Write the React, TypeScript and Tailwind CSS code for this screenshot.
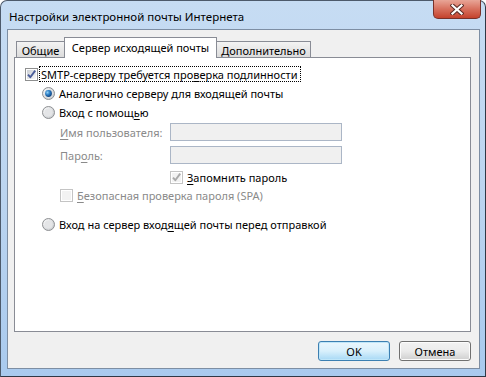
import React from 'react';

const ui = "font-['Segoe_UI','Noto_Sans',sans-serif] text-[11px] leading-none";

function Check({ checked, disabled }: { checked?: boolean; disabled?: boolean }) {
  return (
    <svg width="13" height="13" viewBox="0 0 13 13" className="shrink-0">
      <defs>
        <linearGradient id="cbg" x1="0" y1="0" x2="1" y2="1">
          <stop offset="0" stopColor="#cbcfd5" />
          <stop offset="1" stopColor="#f7f7f7" />
        </linearGradient>
      </defs>
      <rect x="0.5" y="0.5" width="12" height="12" fill="#fff" stroke={disabled ? '#c4c4c4' : '#8e8f8f'} />
      <rect x="2" y="2" width="9" height="9" fill={disabled ? '#f2f2f2' : 'url(#cbg)'} />
      {checked && (
        <path
          d="M3 6.6 L5.3 9.2 L10.2 2.6"
          fill="none"
          stroke={disabled ? '#a9a9a9' : '#4a5d9a'}
          strokeWidth="1.9"
          strokeLinejoin="round"
        />
      )}
    </svg>
  );
}

function Radio({ checked }: { checked?: boolean }) {
  return (
    <svg width="13" height="13" viewBox="0 0 13 13" className="shrink-0">
      <defs>
        <radialGradient id="rbg" cx="0.35" cy="0.35" r="0.7">
          <stop offset="0" stopColor="#ffffff" />
          <stop offset="1" stopColor="#c9cccf" />
        </radialGradient>
        <radialGradient id="rdot" cx="0.35" cy="0.35" r="0.7">
          <stop offset="0" stopColor="#8fd0f6" />
          <stop offset="0.5" stopColor="#2a7cc3" />
          <stop offset="1" stopColor="#0d3e7a" />
        </radialGradient>
      </defs>
      <circle cx="6.5" cy="6.5" r="6" fill="url(#rbg)" stroke="#8e9093" />
      <circle cx="6.5" cy="6.5" r="4" fill="#e4e5e7" />
      {checked && <circle cx="6.5" cy="6.5" r="3.4" fill="url(#rdot)" />}
    </svg>
  );
}

function Label({ text, u }: { text: string; u: number }) {
  return (
    <span className="whitespace-nowrap">
      {text.slice(0, u)}
      <span className="underline underline-offset-2">{text[u]}</span>
      {text.slice(u + 1)}
    </span>
  );
}

export default function App() {
  return (
    <div className={`w-[486px] h-[377px] bg-white ${ui}`}>
      <div className="w-[486px] h-[377px] flex flex-col rounded-t-[7px] border border-[#4d5a6b] border-r-[#2f3845] border-b-[#2f3845] bg-gradient-to-b from-[#c6dcf3] via-[#bcd5f0] to-[#a9caee] px-[5px] pl-[6px] pb-[7px]">
        {/* title bar */}
        <div className="h-[28px] flex items-start justify-between shrink-0">
          <div className="pl-[2px] pt-[10px] text-[11.5px] text-black">Настройки электронной почты Интернета</div>
          <div className="-mt-px -mr-px w-[48px] h-[19px] rounded-b-[5px] border border-[#79312a] border-t-0 bg-gradient-to-b from-[#e8a597] via-[#d7705e] to-[#c4412c] flex items-center justify-center">
            <svg width="14" height="11" viewBox="0 0 14 11">
              <path d="M2.5 1.5 L11.5 9.5 M11.5 1.5 L2.5 9.5" stroke="#5a2a24" strokeWidth="4.2" strokeLinecap="square" />
              <path d="M2.5 1.5 L11.5 9.5 M11.5 1.5 L2.5 9.5" stroke="#fff" strokeWidth="2.2" strokeLinecap="square" />
            </svg>
          </div>
        </div>

        {/* client area */}
        <div className="flex-1 flex flex-col border border-[#7d8ea3] bg-[#f0f0f0] pl-[6px] pr-[8px] pt-[7px]">
          {/* tabs */}
          <div className="h-[20px] flex items-end pl-[2px] shrink-0">
            <div className="w-[48px] h-[16px] border border-r-0 border-b-0 border-[#898c95] bg-gradient-to-b from-[#f3f3f3] to-[#dcdcdc] flex items-center justify-center pt-[2px]">
              Общие
            </div>
            <div className="relative z-10 -mb-px w-[153px] h-[21px] border border-b-0 border-[#898c95] bg-white flex items-center justify-center pb-[2px]">
              Сервер исходящей почты
            </div>
            <div className="w-[94px] h-[16px] border border-l-0 border-b-0 border-[#898c95] bg-gradient-to-b from-[#f3f3f3] to-[#dcdcdc] flex items-center justify-center pt-[2px]">
              Дополнительно
            </div>
          </div>

          {/* panel */}
          <div className="h-[275px] border border-[#898c95] bg-white flex flex-col shrink-0 pl-[10px] text-black">
            <div className="mt-[8px] h-[16px] flex items-center">
              <Check checked />
              <div className="ml-[1px] h-[16px] pl-[1px] pr-[2px] flex items-center border border-dotted border-black">
                <Label text="SMTP-серверу требуется проверка подлинности" u={26} />
              </div>
            </div>
            <div className="mt-[3px] h-[16px] flex items-center gap-[4px] ml-[17px]">
              <Radio checked />
              <Label text="Аналогично серверу для входящей почты" u={4} />
            </div>
            <div className="mt-[3px] h-[16px] flex items-center gap-[4px] ml-[17px]">
              <Radio />
              <Label text="Вход с помощью" u={12} />
            </div>
            <div className="mt-[3px] h-[18px] flex items-center ml-[35px] text-[#8a8a8a]">
              <div className="w-[110px]">
                <Label text="Имя пользователя:" u={0} />
              </div>
              <div className="w-[172px] h-[18px] border border-[#abb6c6] bg-[#f0f0f0]" />
            </div>
            <div className="mt-[5px] h-[18px] flex items-center ml-[35px] text-[#8a8a8a]">
              <div className="w-[110px]">
                <Label text="Пароль:" u={3} />
              </div>
              <div className="w-[172px] h-[18px] border border-[#abb6c6] bg-[#f0f0f0]" />
            </div>
            <div className="mt-[5px] h-[16px] flex items-center gap-[4px] ml-[145px]">
              <Check checked disabled />
              <Label text="Запомнить пароль" u={0} />
            </div>
            <div className="mt-[2px] h-[16px] flex items-center gap-[4px] ml-[35px] text-[#8a8a8a]">
              <Check disabled />
              <Label text="Безопасная проверка пароля (SPA)" u={0} />
            </div>
            <div className="mt-[13px] h-[16px] flex items-center gap-[4px] ml-[17px]">
              <Radio />
              <Label text="Вход на сервер входящей почты перед отправкой" u={19} />
            </div>
          </div>

          {/* buttons */}
          <div className="mt-[9px] flex justify-end gap-[9px]">
            <button className="w-[72px] h-[20px] rounded-[3px] border border-[#3c7fb1] bg-gradient-to-b from-[#eaf6fd] via-[#d9f0fc] to-[#a7d9f5] text-black shadow-[inset_0_0_0_1px_#bfe6f9]">
              OK
            </button>
            <button className="w-[72px] h-[20px] rounded-[3px] border border-[#707070] bg-gradient-to-b from-[#f2f2f2] via-[#ebebeb] to-[#cfcfcf] text-black shadow-[inset_0_0_0_1px_#fcfcfc]">
              Отмена
            </button>
          </div>
        </div>
      </div>
    </div>
  );
}
